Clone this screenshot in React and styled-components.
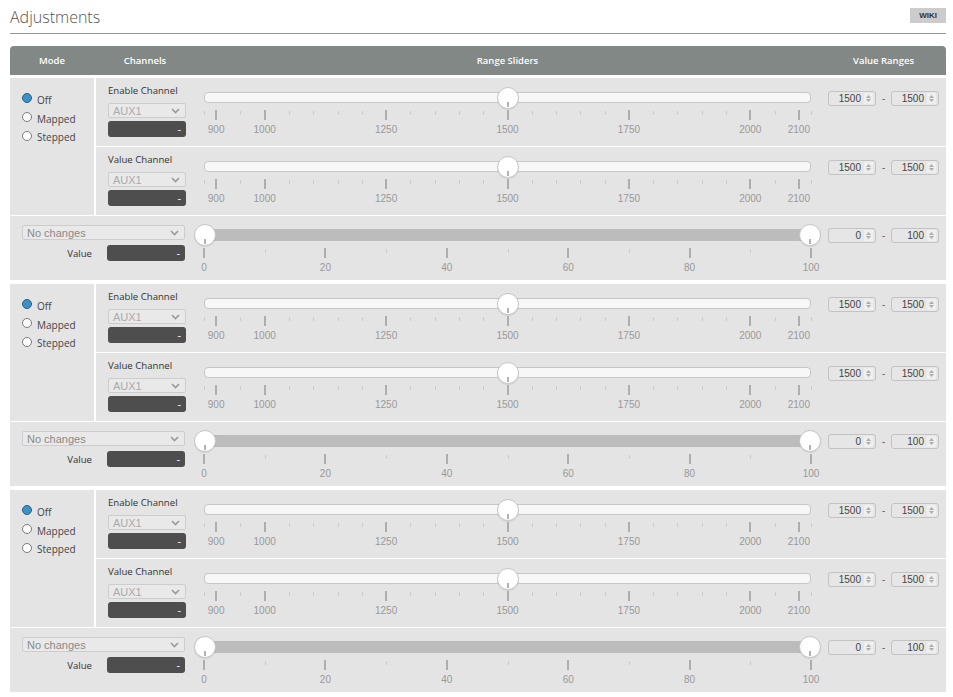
import React from "react";
import styled, { createGlobalStyle } from "styled-components";

const GlobalStyle = createGlobalStyle`
  body {
    margin: 0;
    background: #ffffff;
    font-family: "Open Sans", "Liberation Sans", sans-serif;
  }
`;

const Page = styled.div`
  padding: 0 7px 0 10px;
  width: 936px;
`;

const TitleBar = styled.div`
  display: flex;
  align-items: center;
  justify-content: space-between;
  height: 33px;
  border-bottom: 1px solid #5aaac6;
`;

const Title = styled.div`
  font-size: 16px;
  font-weight: 300;
  color: #555555;
  margin-top: 1px;
`;

const WikiButton = styled.div`
  background: #cccccc;
  color: #333333;
  font-family: "Liberation Sans", sans-serif;
  font-size: 8px;
  font-weight: bold;
  height: 15px;
  line-height: 15px;
  padding: 0 9px;
  margin-top: -2px;
`;

const HeaderRow = styled.div`
  display: grid;
  grid-template-columns: 84px 110px 607px 135px;
  height: 29px;
  margin-top: 12px;
  background: #828885;
  border-radius: 4px 4px 0 0;
  color: #ffffff;
  font-size: 9.5px;
  font-weight: 600;
  align-items: center;
  text-align: center;
`;

const HeaderCell = styled.div`
  padding-left: ${({ $shiftLeft }) => $shiftLeft || 0}px;
  padding-right: ${({ $shiftRight }) => $shiftRight || 0}px;
`;

const Blocks = styled.div`
  display: flex;
  flex-direction: column;
  gap: 4px;
  margin-top: 3px;
`;

const Block = styled.div`
  display: grid;
  grid-template-columns: 84px 1fr;
  grid-template-rows: 68px 68px 64px;
  gap: 1px 2px;
  background: #ffffff;
`;

const ModeCell = styled.div`
  grid-row: 1 / 3;
  background: #e4e4e4;
  padding: 15px 0 0 12px;
  display: flex;
  flex-direction: column;
  gap: 4px;
`;

const RadioRow = styled.label`
  display: flex;
  align-items: center;
  gap: 5px;
  font-size: 10px;
  color: #444444;
  height: 14.5px;
`;

const RadioDot = styled.span`
  width: 8px;
  height: 8px;
  border-radius: 50%;
  border: 1px solid ${({ $on }) => ($on ? "#2c5f82" : "#7a7a7a")};
  background: ${({ $on }) => ($on ? "#3c92c6" : "#ffffff")};
  margin-top: ${({ $on }) => ($on ? "-4px" : "-3px")};
  flex: none;
`;

const ChannelRow = styled.div`
  background: #e4e4e4;
  display: grid;
  grid-template-columns: 108px 607px 135px;
`;

const FunctionRow = styled.div`
  grid-column: 1 / 3;
  background: #e4e4e4;
  display: grid;
  grid-template-columns: 194px 607px 135px;
`;

const ChannelCell = styled.div`
  padding: 6px 0 0 12px;
  display: flex;
  flex-direction: column;
`;

const ChannelLabel = styled.div`
  font-size: 9.6px;
  color: #333333;
  line-height: 14px;
  height: 19px;
`;

const SelectBox = styled.div`
  width: ${({ $width }) => $width}px;
  height: 15px;
  box-sizing: border-box;
  border: 1px solid #cdcdcd;
  border-radius: 2px;
  background: #e9e9e9;
  display: flex;
  align-items: center;
  justify-content: space-between;
  padding: 0 5px 0 4px;
  font-family: "Liberation Sans", sans-serif;
  font-size: 11px;
  color: ${({ $dim }) => ($dim ? "#aaaaaa" : "#8a8a8a")};
`;

const DarkField = styled.div`
  width: 78px;
  height: 16px;
  margin-top: ${({ $flush }) => ($flush ? 0 : 3)}px;
  border-radius: 3px;
  background: #4e4e4e;
  color: #ffffff;
  font-size: 11px;
  line-height: 16px;
  text-align: right;
  padding-right: 5px;
  box-sizing: border-box;
`;

const FunctionCell = styled.div`
  padding: 9px 0 0 12px;
  display: flex;
  flex-direction: column;
`;

const ValueLine = styled.div`
  display: flex;
  align-items: center;
  margin-top: 5px;
  gap: 15px;
`;

const ValueLabel = styled.div`
  width: 70px;
  text-align: right;
  font-size: 9.6px;
  color: #333333;
`;

const SliderCell = styled.div`
  position: relative;
  padding-top: ${({ $top }) => $top}px;
`;

const Track = styled.div`
  position: relative;
  height: ${({ $thick }) => ($thick ? 12 : 11)}px;
  box-sizing: border-box;
  border-radius: 4px;
  border: 1px solid ${({ $thick }) => ($thick ? "#bcbcbc" : "#c6c6c6")};
  background: ${({ $thick }) => ($thick ? "#bcbcbc" : "#f7f7f7")};
`;

const Handle = styled.div`
  position: absolute;
  top: 50%;
  width: 22px;
  height: 22px;
  margin: -11px 0 0 -11px;
  box-sizing: border-box;
  border-radius: 50%;
  border: 1px solid #c6c6c6;
  background: #ffffff;
  box-shadow: 0 1px 1px rgba(0, 0, 0, 0.08);

  &::after {
    content: "";
    position: absolute;
    left: 9px;
    bottom: 1px;
    width: 2px;
    height: 5px;
    background: #b2b2b2;
  }
`;

const Pips = styled.div`
  position: relative;
  height: 34px;
`;

const Tick = styled.div`
  position: absolute;
  top: ${({ $major }) => ($major ? 7 : 8)}px;
  width: ${({ $major }) => ($major ? 2 : 1)}px;
  height: ${({ $major }) => ($major ? 10 : 4)}px;
  margin-left: ${({ $major }) => ($major ? -1 : 0)}px;
  background: ${({ $major }) => ($major ? "#aeaeae" : "#cccccc")};
`;

const PipLabel = styled.div`
  position: absolute;
  top: 21px;
  transform: translateX(-50%);
  font-family: "Liberation Sans", sans-serif;
  font-size: 10px;
  color: #999999;
`;

const RangeCell = styled.div`
  display: flex;
  align-items: flex-start;
  padding: ${({ $top }) => $top}px 0 0 17px;
`;

const NumberInput = styled.div`
  width: 48px;
  height: 15px;
  box-sizing: border-box;
  border: 1px solid #c3c3c3;
  border-radius: 3px;
  background: #e6e6e6;
  display: flex;
  align-items: center;
  justify-content: flex-end;
  font-family: "Liberation Sans", sans-serif;
  font-size: 10px;
  color: #444444;
`;

const Spinner = styled.span`
  display: flex;
  align-items: center;
  justify-content: center;
  width: 9px;
  height: 11px;
  margin: 0 2px 0 3px;
  background: #efefef;
`;

const Dash = styled.div`
  width: 15px;
  text-align: center;
  font-size: 10px;
  color: #555555;
  line-height: 15px;
`;

const Chevron = () => (
  <svg width="9" height="6" viewBox="0 0 9 6">
    <polyline points="1,1 4.5,4.5 8,1" fill="none" stroke="#9a9a9a" strokeWidth="1.6" />
  </svg>
);

const SpinIcon = () => (
  <svg width="5" height="7" viewBox="0 0 5 7">
    <polygon points="2.5,0 5,3 0,3" fill="#adadad" />
    <polygon points="0,4 5,4 2.5,7" fill="#adadad" />
  </svg>
);

const CH_MIN = 875;
const CH_MAX = 2125;
const CH_MAJOR = [900, 1000, 1250, 1500, 1750, 2000, 2100];
const CH_MINOR = [
  875, 950, 1050, 1100, 1150, 1200, 1300, 1350, 1400, 1450, 1550, 1600, 1650,
  1700, 1800, 1850, 1900, 1950, 2050, 2125,
];
const VAL_MAJOR = [0, 20, 40, 60, 80, 100];
const VAL_MINOR = [10, 30, 50, 70, 90];

const pct = (v, min, max) => `${((v - min) / (max - min)) * 100}%`;

const RangeSlider = ({ min, max, major, minor, handles, thick, top }) => (
  <SliderCell $top={top}>
    <Track $thick={thick}>
      {handles.map((h, i) => (
        <Handle key={i} style={{ left: pct(h, min, max) }} />
      ))}
    </Track>
    <Pips>
      {minor.map((v) => (
        <Tick key={`m${v}`} style={{ left: pct(v, min, max) }} />
      ))}
      {major.map((v) => (
        <Tick key={`M${v}`} $major style={{ left: pct(v, min, max) }} />
      ))}
      {major.map((v) => (
        <PipLabel key={`l${v}`} style={{ left: pct(v, min, max) }}>
          {v}
        </PipLabel>
      ))}
    </Pips>
  </SliderCell>
);

const ValueRange = ({ from, to, top }) => (
  <RangeCell $top={top}>
    <NumberInput>
      {from}
      <Spinner>
        <SpinIcon />
      </Spinner>
    </NumberInput>
    <Dash>-</Dash>
    <NumberInput>
      {to}
      <Spinner>
        <SpinIcon />
      </Spinner>
    </NumberInput>
  </RangeCell>
);

const ChannelLine = ({ label }) => (
  <ChannelRow>
    <ChannelCell>
      <ChannelLabel>{label}</ChannelLabel>
      <SelectBox $width={78} $dim>
        AUX1
        <Chevron />
      </SelectBox>
      <DarkField>-</DarkField>
    </ChannelCell>
    <RangeSlider
      min={CH_MIN}
      max={CH_MAX}
      major={CH_MAJOR}
      minor={CH_MINOR}
      handles={[1500]}
      top={14}
    />
    <ValueRange from="1500" to="1500" top={13} />
  </ChannelRow>
);

const AdjustmentBlock = () => (
  <Block>
    <ModeCell>
      {["Off", "Mapped", "Stepped"].map((m) => (
        <RadioRow key={m}>
          <RadioDot $on={m === "Off"} />
          {m}
        </RadioRow>
      ))}
    </ModeCell>
    <ChannelLine label="Enable Channel" />
    <ChannelLine label="Value Channel" />
    <FunctionRow>
      <FunctionCell>
        <SelectBox $width={163}>
          No changes
          <Chevron />
        </SelectBox>
        <ValueLine>
          <ValueLabel>Value</ValueLabel>
          <DarkField $flush>-</DarkField>
        </ValueLine>
      </FunctionCell>
      <RangeSlider
        min={0}
        max={100}
        major={VAL_MAJOR}
        minor={VAL_MINOR}
        handles={[0, 100]}
        thick
        top={13}
      />
      <ValueRange from="0" to="100" top={12} />
    </FunctionRow>
  </Block>
);

export default function App() {
  return (
    <Page>
      <GlobalStyle />
      <TitleBar>
        <Title>Adjustments</Title>
        <WikiButton>WIKI</WikiButton>
      </TitleBar>
      <HeaderRow>
        <HeaderCell>Mode</HeaderCell>
        <HeaderCell $shiftRight={8}>Channels</HeaderCell>
        <HeaderCell>Range Sliders</HeaderCell>
        <HeaderCell $shiftLeft={10}>Value Ranges</HeaderCell>
      </HeaderRow>
      <Blocks>
        <AdjustmentBlock />
        <AdjustmentBlock />
        <AdjustmentBlock />
      </Blocks>
    </Page>
  );
}
